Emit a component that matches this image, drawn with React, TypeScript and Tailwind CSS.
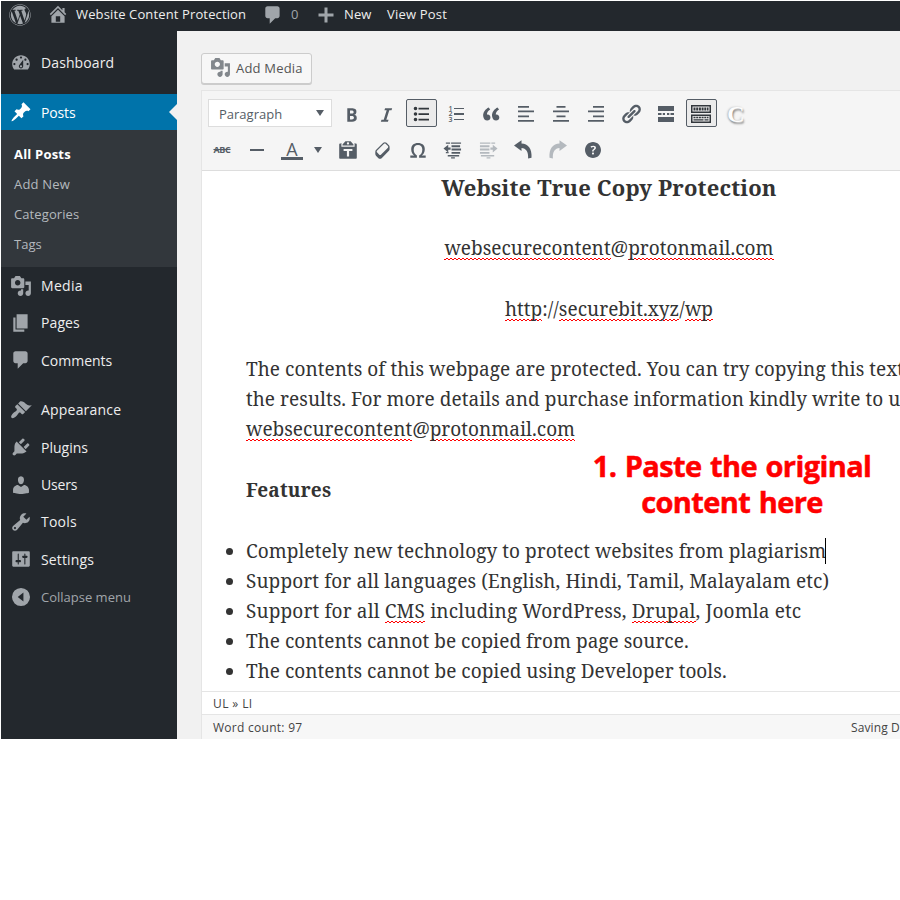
import type { ReactNode } from "react";
import { FaWordpress } from "react-icons/fa";

const ICONS = {
  home: "M16 8.5l1.53 1.53-1.06 1.06L10 4.6l-6.47 6.49-1.06-1.06L10 2.5l4 4v-2h2v4zm-6-2.46l6 5.99V18H4v-5.97zM12 17v-5H8v5h4z",
  comment: "M5 2h9c1.1 0 2 .9 2 2v7c0 1.1-.9 2-2 2h-2l-5 5v-5H5c-1.1 0-2-.9-2-2V4c0-1.1.9-2 2-2z",
  plus: "M17.5 8.5v3h-6v6h-3v-6h-6v-3h6v-6h3v6z",
  dashboard:
    "M3.76 16h12.48c1.1-1.37 1.76-3.11 1.76-5 0-4.42-3.58-8-8-8s-8 3.58-8 8c0 1.89.66 3.63 1.76 5zM10 4c.55 0 1 .45 1 1s-.45 1-1 1-1-.45-1-1 .45-1 1-1zM6 6c.55 0 1 .45 1 1s-.45 1-1 1-1-.45-1-1 .45-1 1-1zm8 0c.55 0 1 .45 1 1s-.45 1-1 1-1-.45-1-1 .45-1 1-1zm-5.37 5.55L12 7v6c0 1.1-.9 2-2 2s-2-.9-2-2c0-.57.24-1.08.63-1.45zM4 10c.55 0 1 .45 1 1s-.45 1-1 1-1-.45-1-1 .45-1 1-1zm12 0c.55 0 1 .45 1 1s-.45 1-1 1-1-.45-1-1 .45-1 1-1zm-5 3c0-.55-.45-1-1-1s-1 .45-1 1 .45 1 1 1 1-.45 1-1z",
  pin: "M10.44 3.02l1.82-1.82 6.36 6.35-1.83 1.82c-1.05-.68-2.48-.57-3.41.36l-.75.75c-.92.93-1.04 2.35-.35 3.41l-1.83 1.82-2.41-2.41-2.8 2.79c-.42.42-3.38 2.71-3.8 2.29s1.86-3.39 2.28-3.81l2.79-2.79L4.1 9.36l1.83-1.82c1.05.69 2.48.57 3.4-.36l.75-.75c.93-.92 1.05-2.35.36-3.41z",
  media:
    "M13 11V4c0-.55-.45-1-1-1h-1.67L9 1H5L3.67 3H2c-.55 0-1 .45-1 1v7c0 .55.45 1 1 1h10c.55 0 1-.45 1-1zM7 4.5c1.38 0 2.5 1.12 2.5 2.5S8.38 9.5 7 9.5 4.5 8.38 4.5 7 5.62 4.5 7 4.5zM14 6h5v10.5c0 1.38-1.12 2.5-2.5 2.5S14 17.88 14 16.5s1.12-2.5 2.5-2.5c.17 0 .34.02.5.05V9h-3V6zm-4 8.05V13h2v3.5c0 1.38-1.12 2.5-2.5 2.5S7 17.88 7 16.5 8.12 14 9.5 14c.17 0 .34.02.5.05z",
  page: "M6 15V2h10v13H6zm-1 1h8v2H3V5h2v11z",
  appearance:
    "M14.48 11.06L7.41 3.99l1.5-1.5c.5-.56 2.3-.47 3.51.32 1.21.8 1.43 1.28 2.91 2.1 1.18.64 2.45 1.26 4.45.85zm-.71.71L6.7 4.7 4.93 6.47c-.39.39-.39 1.02 0 1.41l1.06 1.06c.39.39.39 1.03 0 1.42-.6.6-1.43 1.11-2.21 1.69-.35.26-.7.53-1.01.84C1.43 14.23.4 16.08 1.4 17.07c.99 1 2.84-.03 4.18-1.36.31-.31.58-.66.85-1.02.57-.78 1.08-1.61 1.69-2.21.39-.39 1.02-.39 1.41 0l1.06 1.06c.39.39 1.02.39 1.41 0z",
  plugins:
    "M13.11 4.36L9.87 7.6 8 5.73l3.24-3.24c.35-.34 1.05-.2 1.56.32.52.51.66 1.21.31 1.55zm-8 1.77l.91-1.12 9.01 9.01-1.19.84c-.71.71-2.63 1.16-3.82 1.16H6.14L4.9 17.26c-.59.59-1.54.59-2.12 0-.59-.58-.59-1.53 0-2.12l1.24-1.24v-3.88c0-1.13.4-3.19 1.09-3.89zm7.26 3.97l3.24-3.24c.34-.35 1.04-.21 1.55.31.52.51.66 1.21.31 1.55l-3.24 3.25z",
  users:
    "M10 9.25c-2.27 0-2.73-3.44-2.73-3.44C7 4.02 7.82 2 9.97 2c2.16 0 2.98 2.02 2.71 3.81 0 0-.41 3.44-2.68 3.44zm0 2.57L12.72 10c2.39 0 4.52 2.33 4.52 4.53v2.49s-3.65 1.13-7.24 1.13c-3.65 0-7.24-1.13-7.24-1.13v-2.49c0-2.25 1.94-4.48 4.47-4.48z",
  tools:
    "M16.68 9.77c-1.34 1.34-3.3 1.67-4.95.99l-5.41 6.52c-.99.99-2.59.99-3.58 0s-.99-2.59 0-3.57l6.52-5.42c-.68-1.65-.35-3.61.99-4.95 1.28-1.28 3.12-1.62 4.72-1.06l-2.89 2.89 2.82 2.82 2.86-2.87c.53 1.58.18 3.39-1.08 4.65zM3.81 16.21c.4.39 1.04.39 1.43 0 .4-.4.4-1.04 0-1.43-.39-.4-1.03-.4-1.43 0-.39.39-.39 1.03 0 1.43z",
  settings:
    "M18 16V4c0-.55-.45-1-1-1H3c-.55 0-1 .45-1 1v12c0 .55.45 1 1 1h14c.55 0 1-.45 1-1zM8 11h1c.55 0 1 .45 1 1s-.45 1-1 1H8v1.5c0 .28-.22.5-.5.5s-.5-.22-.5-.5V13H6c-.55 0-1-.45-1-1s.45-1 1-1h1V5.5c0-.28.22-.5.5-.5s.5.22.5.5V11zm5-2h-1c-.55 0-1-.45-1-1s.45-1 1-1h1V5.5c0-.28.22-.5.5-.5s.5.22.5.5V7h1c.55 0 1 .45 1 1s-.45 1-1 1h-1v5.5c0 .28-.22.5-.5.5s-.5-.22-.5-.5V9z",
  collapse: "M10 1.8a8.2 8.2 0 1 1 0 16.4 8.2 8.2 0 0 1 0-16.4zM12.2 14V6L7 10z",
  bold: "M6 4v13h4.54c1.37 0 2.46-.33 3.26-1 .8-.66 1.2-1.58 1.2-2.77 0-.84-.17-1.51-.51-2.01s-.9-.85-1.67-1.03v-.09c.57-.1 1.02-.4 1.36-.9s.51-1.13.51-1.91c0-1.14-.39-1.98-1.17-2.5C12.75 4.26 11.5 4 9.78 4H6zm2.57 5.15V6.26h1.36c.73 0 1.27.11 1.61.32.34.22.51.58.51 1.07 0 .54-.16.92-.47 1.15s-.82.35-1.51.35h-1.5zm0 2.19h1.6c1.44 0 2.16.53 2.16 1.61 0 .6-.17 1.05-.51 1.34s-.86.43-1.57.43H8.57v-3.38z",
  italic: "M14.78 6h-2.13l-2.8 9h2.12l-.62 2H4.6l.62-2h2.14l2.8-9H8.03l.62-2h6.75z",
  ul: "M4.5 2.7a1.8 1.8 0 1 1 0 3.6 1.8 1.8 0 0 1 0-3.6zM4.5 8.2a1.8 1.8 0 1 1 0 3.6 1.8 1.8 0 0 1 0-3.6zM4.5 13.7a1.8 1.8 0 1 1 0 3.6 1.8 1.8 0 0 1 0-3.6zM7.5 3.7H18v1.7H7.5zM7.5 9.2H18v1.7H7.5zM7.5 14.7H18v1.7H7.5z",
  quote:
    "M9.49 13.22c0-.74-.2-1.38-.61-1.9-.62-.78-1.83-.88-2.53-.72-.29-1.65 1.11-3.75 2.92-4.65L7.88 4c-2.73 1.3-5.42 4.28-4.96 8.05C3.21 14.43 4.59 16 6.54 16c.85 0 1.56-.25 2.12-.75s.83-1.18.83-2.03zm8.05 0c0-.74-.2-1.38-.61-1.9-.63-.78-1.83-.88-2.53-.72-.29-1.65 1.11-3.75 2.92-4.65L15.93 4c-2.73 1.3-5.41 4.28-4.95 8.05.29 2.38 1.66 3.95 3.61 3.95.85 0 1.56-.25 2.12-.75s.83-1.18.83-2.03z",
  alignLeft: "M2 2h11v1.7H2zM2 6.5h16v1.7H2zM2 11.5h11v1.7H2zM2 16h16v1.7H2z",
  alignCenter: "M5.5 2h9v1.7h-9zM2 6.5h16v1.7H2zM5.5 11.5h9v1.7h-9zM2 16h16v1.7H2z",
  alignRight: "M7 2h11v1.7H7zM2 6.5h16v1.7H2zM7 11.5h11v1.7H7zM2 16h16v1.7H2z",
  link: "M17.74 2.76c1.68 1.69 1.68 4.41 0 6.1l-1.53 1.52c-1.12 1.12-2.7 1.47-4.14 1.09l2.62-2.61.76-.77.76-.76c.84-.84.84-2.2 0-3.04-.84-.85-2.2-.85-3.04 0l-.77.76-3.38 3.38c-.37-1.44-.02-3.02 1.1-4.14l1.52-1.53c1.69-1.68 4.42-1.68 6.1 0zM8.59 13.43l5.34-5.34c.42-.42.42-1.1 0-1.52-.44-.43-1.13-.39-1.53 0l-5.33 5.34c-.42.42-.42 1.1 0 1.52.44.43 1.13.39 1.52 0zm-.76 2.29l4.14-4.15c.38 1.44.03 3.02-1.09 4.14l-1.52 1.53c-1.69 1.68-4.41 1.68-6.1 0-1.68-1.68-1.68-4.42 0-6.1l1.53-1.52c1.12-1.12 2.7-1.47 4.14-1.1l-4.14 4.15c-.85.84-.85 2.2 0 3.05.84.84 2.2.84 3.04 0z",
  more: "M18 7V2H2v5h16zM5.5 11V9H2v2h3.5zm3.5 0V9H6.8v2H9zm4.3 0V9h-2.3v2h2.3zm4.7 0V9h-3.5v2h3.5zm0 7v-5H2v5h16z",
  sink: "M0 1h20v8H0zM1.5 2.5v5h17v-5zM0 10.5h20V19H0zM1.5 12v5.5h17V12zM2.5 3.5h2v3h-2zM5.2 3.5h2v3h-2zM7.9 3.5h2v3h-2zM10.6 3.5h2v3h-2zM13.3 3.5h2v3h-2zM16 3.5h1.5v3H16zM2.5 12.8h2v1.5h-2zM5.2 12.8h2v1.5h-2zM7.9 12.8h2v1.5h-2zM10.6 12.8h2v1.5h-2zM13.3 12.8h2v1.5h-2zM16 12.8h1.5v1.5H16zM2.5 15.2h10v1.4h-10zM13.5 15.2h4v1.4h-4z",
  eraser:
    "M14.29 4.59l1.1 1.11c.41.4.61.94.61 1.47v2.12c0 .53-.2 1.07-.61 1.47l-6.63 6.63c-.4.41-.94.61-1.47.61s-1.07-.2-1.47-.61l-1.11-1.1-1.1-1.11c-.41-.4-.61-.94-.61-1.47v-2.12c0-.54.2-1.07.61-1.48l6.63-6.62c.4-.41.94-.61 1.47-.61s1.06.2 1.47.61zm-6.21 9.7l6.42-6.42c.39-.39.39-1.03 0-1.43L12.36 4.3c-.19-.19-.45-.29-.72-.29s-.52.1-.71.29l-6.42 6.42c-.39.4-.39 1.04 0 1.43l2.14 2.14c.38.38 1.04.38 1.43 0z",
  omega:
    "M10 5.4c1.27 0 2.24.36 2.91 1.08.66.71 1 1.76 1 3.13 0 1.28-.23 2.37-.69 3.27-.47.89-1.27 1.52-2.22 2.12v2h6v-2h-3.69c.92-.64 1.62-1.34 2.12-2.34.49-1.01.74-2.13.74-3.35 0-1.78-.55-3.19-1.65-4.22S11.92 3.54 10 3.54s-3.43.53-4.52 1.57c-1.1 1.04-1.65 2.44-1.65 4.2 0 1.21.24 2.31.73 3.33.48 1.01 1.19 1.71 2.1 2.36H3v2h6v-2c-.98-.64-1.8-1.28-2.24-2.17-.45-.89-.67-1.96-.67-3.22 0-1.37.33-2.41 1-3.13C7.75 5.76 8.72 5.4 10 5.4z",
  paste:
    "M12.38 2L15 5v1H5V5l2.64-3h4.74zM10 5c.55 0 1-.44 1-1 0-.55-.45-1-1-1s-1 .45-1 1c0 .56.45 1 1 1zm5.45-1H17c.55 0 1 .45 1 1v12c0 .56-.45 1-1 1H3c-.55 0-1-.44-1-1V5c0-.55.45-1 1-1h1.55L4 4.63V7h12V4.63zM14 11V9H6v2h3v5h2v-5h3z",
  outdent: "M3 1.5h4.5V3H3zM8.5 1.5H19V3H8.5zM9 4.5h9v2H9zM9 8h10v2H9zM9 11.5h9v2H9zM3 11.5h3V13H3zM5 14.8h12v1.5H5zM8 6.8v2.5H5.5V12L.5 8l5-4v2.8zM8.5 17h4v1.5h-4z",
  indent: "M1 1.5h11V3H1zM13 1.5h4V3h-4zM1 4.5h10v2H1zM1 8h10v2H1zM1 11.5h10v2H1zM2 14.8h14v1.5H2zM12 6.8v2.5h2.5V12l5-4-5-4v2.8zM8 17h4v1.5H8z",
  undo: "M1 5.5L8.5.3v3.1C15 3.8 19.2 8.5 18.5 17.8l-3.4.6C15.6 11.5 13 8.3 8.5 7.9v3z",
  help: "M18 10c0-4.42-3.58-8-8-8s-8 3.58-8 8 3.58 8 8 8 8-3.58 8-8zm-7.3 1.48H9.14v-.43c0-.38.08-.7.24-.98s.46-.57.88-.89c.41-.29.68-.53.81-.71.14-.18.2-.39.2-.62 0-.25-.09-.44-.28-.58-.19-.13-.45-.19-.79-.19-.58 0-1.25.19-2 .57l-.64-1.28c.87-.49 1.8-.74 2.77-.74.81 0 1.45.2 1.92.58.48.39.71.91.71 1.55 0 .43-.09.8-.29 1.11-.19.32-.57.67-1.11 1.06-.38.28-.61.49-.71.63-.1.15-.15.34-.15.57zm-1.47 2.74c-.18-.17-.27-.42-.27-.73 0-.33.08-.58.26-.75s.43-.25.77-.25c.32 0 .57.09.75.26s.27.42.27.74c0 .3-.09.55-.27.72-.18.18-.43.27-.75.27-.33 0-.58-.09-.76-.26z",
};

type IconName = keyof typeof ICONS;

function Icon({ name, className = "size-5" }: { name: IconName; className?: string }) {
  return (
    <svg viewBox="0 0 20 20" className={`shrink-0 ${className}`} fill="currentColor" fillRule="evenodd" aria-hidden="true">
      <path d={ICONS[name]} />
    </svg>
  );
}

function AdminBar() {
  return (
    <header className="flex h-[30px] items-center bg-[#23282d] pb-[3px] pl-2 text-[13px] whitespace-nowrap text-[#eee]">
      <FaWordpress className="size-[22px] shrink-0 text-[#a0a5aa]" />
      <Icon name="home" className="ml-4 size-[22px] -translate-y-px text-[#a0a5aa]" />
      <span className="ml-[7px] w-[186px] tracking-[0.13px]">Website Content Protection</span>
      <Icon name="comment" className="size-[22px] text-[#a0a5aa]" />
      <span className="ml-[7px] w-[25px] text-[#a0a5aa]">0</span>
      <Icon name="plus" className="size-5 text-[#a0a5aa]" />
      <span className="ml-2 w-[43px] tracking-[0.1px]">New</span>
      <span className="tracking-[0.2px]">View Post</span>
    </header>
  );
}

function MenuItem({ icon, label, className = "" }: { icon: IconName; label: string; className?: string }) {
  return (
    <li className="flex h-[37.4px] items-center gap-[9px] pl-[9px] text-[14px] text-[#eee]">
      <Icon name={icon} className="size-[22px] text-[#a0a5aa]" />
      <span className={className}>{label}</span>
    </li>
  );
}

function Sidebar() {
  return (
    <nav className="w-[176px] shrink-0 bg-[#23282d] pt-[13px]">
      <ul>
        <MenuItem icon="dashboard" label="Dashboard" className="tracking-[0.1px]" />
        <li className="relative mt-[12.6px] flex h-9 items-center gap-[9px] bg-[#0073aa] pl-[9px] text-[14px] text-white">
          <Icon name="pin" className="size-[22px]" />
          <span className="pt-0.5 tracking-[-0.15px]">Posts</span>
          <span className="absolute top-[10px] right-0 border-y-8 border-r-8 border-y-transparent border-r-[#f1f1f1]" />
        </li>
        <li>
          <ul className="h-[137px] bg-[#32373c] pt-[9px] pl-[13px] text-[13px] leading-[30px] text-[#b4b9be]">
            <li className="font-bold tracking-[0.2px] text-white">All Posts</li>
            <li className="tracking-[0.2px]">Add New</li>
            <li className="tracking-[0.1px]">Categories</li>
            <li>Tags</li>
          </ul>
        </li>
        <MenuItem icon="media" label="Media" className="tracking-[0.3px]" />
        <MenuItem icon="page" label="Pages" className="pb-0.5 tracking-[0.1px]" />
        <MenuItem icon="comment" label="Comments" />
      </ul>
      <ul className="mt-3">
        <MenuItem icon="appearance" label="Appearance" className="tracking-[0.2px]" />
        <MenuItem icon="plugins" label="Plugins" />
        <MenuItem icon="users" label="Users" className="tracking-[-0.15px]" />
        <MenuItem icon="tools" label="Tools" className="pb-0.5 tracking-[0.2px]" />
        <MenuItem icon="settings" label="Settings" className="tracking-[0.15px]" />
        <li className="flex h-[37.4px] items-center gap-[9px] pl-[9px] text-[13px] text-[#a0a5aa]">
          <Icon name="collapse" className="size-[22px]" />
          <span className="pt-0.5">Collapse menu</span>
        </li>
      </ul>
    </nav>
  );
}

function Tool({ children, active = false, dim = false }: { children: ReactNode; active?: boolean; dim?: boolean }) {
  return (
    <div className={`flex w-[35px] shrink-0 justify-center ${dim ? "text-[#b4b9be]" : "text-[#555d66]"}`}>
      <div
        className={`flex h-7 w-[31px] items-center justify-center rounded-[2px] border pr-px ${
          active ? "border-[#555d66] bg-[#ebebeb]" : "border-transparent"
        }`}
      >
        {children}
      </div>
    </div>
  );
}

function NumberedList() {
  return (
    <div className="flex flex-col">
      {[1, 2, 3].map((n) => (
        <div key={n} className="flex h-[5.5px] items-center gap-px text-[7px] leading-[5.5px] font-semibold">
          <span className="w-[4px]">{n}</span>
          <span className="h-[1.5px] w-[10px] bg-current" />
        </div>
      ))}
    </div>
  );
}

function Toolbar() {
  return (
    <div className="h-[80px] border-b border-[#ddd] bg-[#f5f5f5] pt-2">
      <div className="flex h-7 items-center pl-[6px]">
        <div className="mr-[2px] flex h-7 w-[124px] items-center justify-between border border-[#ddd] bg-white pr-[7px] pl-[10px] text-[13px] text-[#555d66]">
          <span className="pt-[3px]">Paragraph</span>
          <span className="border-x-[4.5px] border-t-[6px] border-x-transparent border-t-[#555d66]" />
        </div>
        <Tool><Icon name="bold" className="size-[21px] translate-y-px" /></Tool>
        <Tool><Icon name="italic" className="size-[21px] translate-y-px" /></Tool>
        <Tool active><Icon name="ul" className="size-5 translate-y-px text-[#32373c]" /></Tool>
        <Tool><span className="pt-0.5"><NumberedList /></span></Tool>
        <Tool><Icon name="quote" className="size-[22px] translate-y-px" /></Tool>
        <Tool><Icon name="alignLeft" className="size-5 translate-y-px" /></Tool>
        <Tool><Icon name="alignCenter" className="size-5 translate-y-px" /></Tool>
        <Tool><Icon name="alignRight" className="size-5 translate-y-px" /></Tool>
        <Tool><Icon name="link" className="size-[22px] translate-y-px" /></Tool>
        <Tool><Icon name="more" className="size-5 translate-y-px" /></Tool>
        <Tool active><Icon name="sink" className="size-5 translate-y-px text-[#32373c]" /></Tool>
        <Tool>
          <span className="pt-0.5 font-['Liberation_Serif',serif] text-[24px] leading-none font-bold text-[#fdfdfd] [text-shadow:1px_2px_2px_#888,-1px_0_2px_#bbb]">
            C
          </span>
        </Tool>
      </div>
      <div className="mt-[9px] flex h-7 items-center pl-[3px]">
        <Tool><span className="text-[9px] font-bold tracking-[-0.3px] line-through">ABC</span></Tool>
        <Tool><span className="h-0.5 w-[14px] bg-current" /></Tool>
        <Tool>
          <span className="flex w-[22px] flex-col items-center">
            <span className="text-[18px] leading-[16px]">A</span>
            <span className="h-[3px] w-[22px] bg-current" />
          </span>
        </Tool>
        <span className="flex w-[21px] justify-center pr-1.5">
          <span className="border-x-[4px] border-t-[6px] border-x-transparent border-t-[#555d66]" />
        </span>
        <Tool><Icon name="paste" className="size-[22px]" /></Tool>
        <Tool><Icon name="eraser" className="size-[22px]" /></Tool>
        <Tool><Icon name="omega" className="size-[22px]" /></Tool>
        <Tool><Icon name="outdent" className="size-[19px] -translate-x-px" /></Tool>
        <Tool dim><Icon name="indent" className="size-[19px]" /></Tool>
        <Tool><Icon name="undo" /></Tool>
        <Tool dim><Icon name="undo" className="size-5 -scale-x-100" /></Tool>
        <Tool><Icon name="help" /></Tool>
      </div>
    </div>
  );
}

/* Word flagged by the spell checker: a two-pixel zigzag under the text. */
function Misspelt({ children }: { children: ReactNode }) {
  return (
    <span className="bg-[linear-gradient(90deg,#ff0000_50%,transparent_50%),linear-gradient(90deg,#ff0000_50%,transparent_50%)] bg-[length:4px_1px] bg-[position:0_calc(100%_-_1px),2px_calc(100%_-_2px)] bg-repeat-x">
      {children}
    </span>
  );
}

function Email() {
  return (
    <>
      <Misspelt>websecurecontent</Misspelt>@<Misspelt>protonmail.com</Misspelt>
    </>
  );
}

function EditorContent() {
  return (
    <div className="relative h-[520px] overflow-hidden bg-white pt-px pl-[44px] font-['Noto_Serif',serif] text-[19px] leading-[30px] whitespace-nowrap text-[#333]">
      <div className="w-[726px] text-center">
        <h1 className="text-[22px] font-bold tracking-[0.16px]">Website True Copy Protection</h1>
        <p className="mt-[31px] tracking-[0.02px]"><Email /></p>
        <p className="mt-[31px] tracking-[0.05px]">
          <Misspelt>http</Misspelt>://<Misspelt>securebit.xyz</Misspelt>/<Misspelt>wp</Misspelt>
        </p>
      </div>
      <p className="mt-[30px] tracking-[0.05px]">
        The contents of this webpage are protected. You can try copying this text
        <br />
        the results. For more details and purchase information kindly write to us
        <br />
        <span className="tracking-[0.02px]"><Email /></span>
      </p>
      <h2 className="mt-[31px] font-bold tracking-[0.2px]">Features</h2>
      <ul className="mt-[31px]">
        {[
          <span className="flex items-center tracking-[0.06px]">
            Completely new technology to protect websites from plagiarism
            <span className="-ml-px h-[26px] w-px bg-black" />
          </span>,
          <span className="tracking-[0.11px]">Support for all languages (English, Hindi, Tamil, Malayalam etc)</span>,
          <span className="tracking-[0.14px]">
            Support for all <Misspelt>CMS</Misspelt> including WordPress, <Misspelt>Drupal</Misspelt>, Joomla etc
          </span>,
          <span className="tracking-[0.02px]">The contents cannot be copied from page source.</span>,
          <span className="tracking-[0.03px]">The contents cannot be copied using Developer tools.</span>,
        ].map((line, i) => (
          <li key={i} className="-ml-5 flex items-center gap-[13px]">
            <span className="size-[7px] rounded-full bg-[#333]" />
            {line}
          </li>
        ))}
      </ul>
      <p className="absolute top-[277px] left-[380px] w-[300px] text-center font-['Open_Sans',sans-serif] text-[29px] leading-[36px] font-bold tracking-[-0.6px] text-[#ff0000] [-webkit-text-stroke:0.5px_#ff0000] [word-spacing:1.5px]">
        1. Paste the original
        <br />
        content here
      </p>
    </div>
  );
}

export default function App() {
  return (
    <div className="h-[900px] w-[900px] overflow-hidden bg-white pt-px pl-px font-['Open_Sans','Noto_Sans',sans-serif]">
      <AdminBar />
      <div className="flex h-[708px]">
        <Sidebar />
        <main className="min-w-0 flex-1 bg-[#f1f1f1] pt-[22px] pl-6">
          <button className="flex h-[31px] w-[111px] items-center gap-[4px] rounded-[3px] border border-[#ccc] bg-[#f7f7f7] pl-[8px] text-[13px] whitespace-nowrap text-[#555] shadow-[0_1px_0_#ccc]">
            <Icon name="media" className="size-[21px] -translate-y-px text-[#82878c]" />
            <span className="ml-px tracking-[0.2px]">Add Media</span>
          </button>
          <section className="mt-[6px] border-t border-l border-[#e5e5e5]">
            <Toolbar />
            <EditorContent />
            <div className="h-[23px] border-t border-[#e5e5e5] bg-white pl-[11px] text-[12px] leading-[23px] tracking-[0.4px] text-[#444]">UL » LI</div>
            <div className="flex h-[25px] border-t border-[#e5e5e5] bg-[#f7f7f7] pl-[11px] text-[12px] leading-[25px] whitespace-nowrap text-[#444]">
              <span className="w-[638px] shrink-0 tracking-[0.27px]">Word count: 97</span>
              <span className="w-[49px] shrink-0 overflow-hidden tracking-[0.1px]">Saving Draft</span>
            </div>
          </section>
        </main>
      </div>
    </div>
  );
}
